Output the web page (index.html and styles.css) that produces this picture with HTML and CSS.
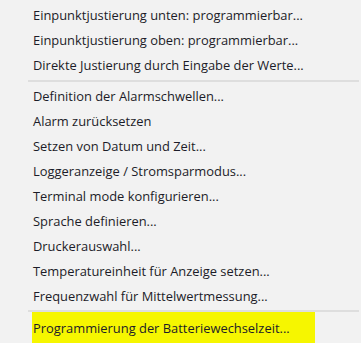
FILE: index.html
```html
<!DOCTYPE html>
<html lang="de">
<head>
    <meta charset="UTF-8">
    <meta name="viewport" content="width=device-width, initial-scale=1.0">
    <title>Menü</title>
    <link rel="stylesheet" href="styles.css">
</head>
<body>
    <div class="menu">
        <div class="item">Einpunktjustierung unten: programmierbar...</div>
        <div class="item">Einpunktjustierung oben: programmierbar...</div>
        <div class="item">Direkte Justierung durch Eingabe der Werte...</div>
        <div class="separator"></div>
        <div class="item">Definition der Alarmschwellen...</div>
        <div class="item">Alarm zurücksetzen</div>
        <div class="item">Setzen von Datum und Zeit...</div>
        <div class="item">Loggeranzeige / Stromsparmodus...</div>
        <div class="item">Terminal mode konfigurieren...</div>
        <div class="item">Sprache definieren...</div>
        <div class="item">Druckerauswahl...</div>
        <div class="item">Temperatureinheit für Anzeige setzen...</div>
        <div class="item">Frequenzwahl für Mittelwertmessung...</div>
        <div class="separator last"></div>
        <div class="item marked"><span class="mark">Programmierung der Batteriewechselzeit...</span></div>
    </div>
</body>
</html>
```

FILE: styles.css
```css
html, body {
    margin: 0;
    height: 100%;
}
body {
    font-family: 'Open Sans', 'Noto Sans', sans-serif;
    font-size: 12.9px;
    background-color: #f2f2f2;
    color: #1c1c28;
    overflow: hidden;
}
.menu {
    padding-top: 3px;
}
.item {
    height: 25px;
    line-height: 25px;
    padding-left: 33px;
    white-space: nowrap;
}
.separator {
    height: 6px;
    margin-left: 28px;
    margin-right: 2px;
    display: flex;
    align-items: center;
}
.separator::after {
    content: '';
    flex: 1;
    height: 2px;
    background-color: #dedede;
}
.separator.last {
    height: 3px;
    align-items: flex-end;
}
.item.marked {
    padding-left: 32px;
    height: auto;
}
.mark {
    display: block;
    width: 282px;
    height: 40px;
    padding-left: 1px;
    padding-top: 4px;
    background-color: #f6f600;
}
```
